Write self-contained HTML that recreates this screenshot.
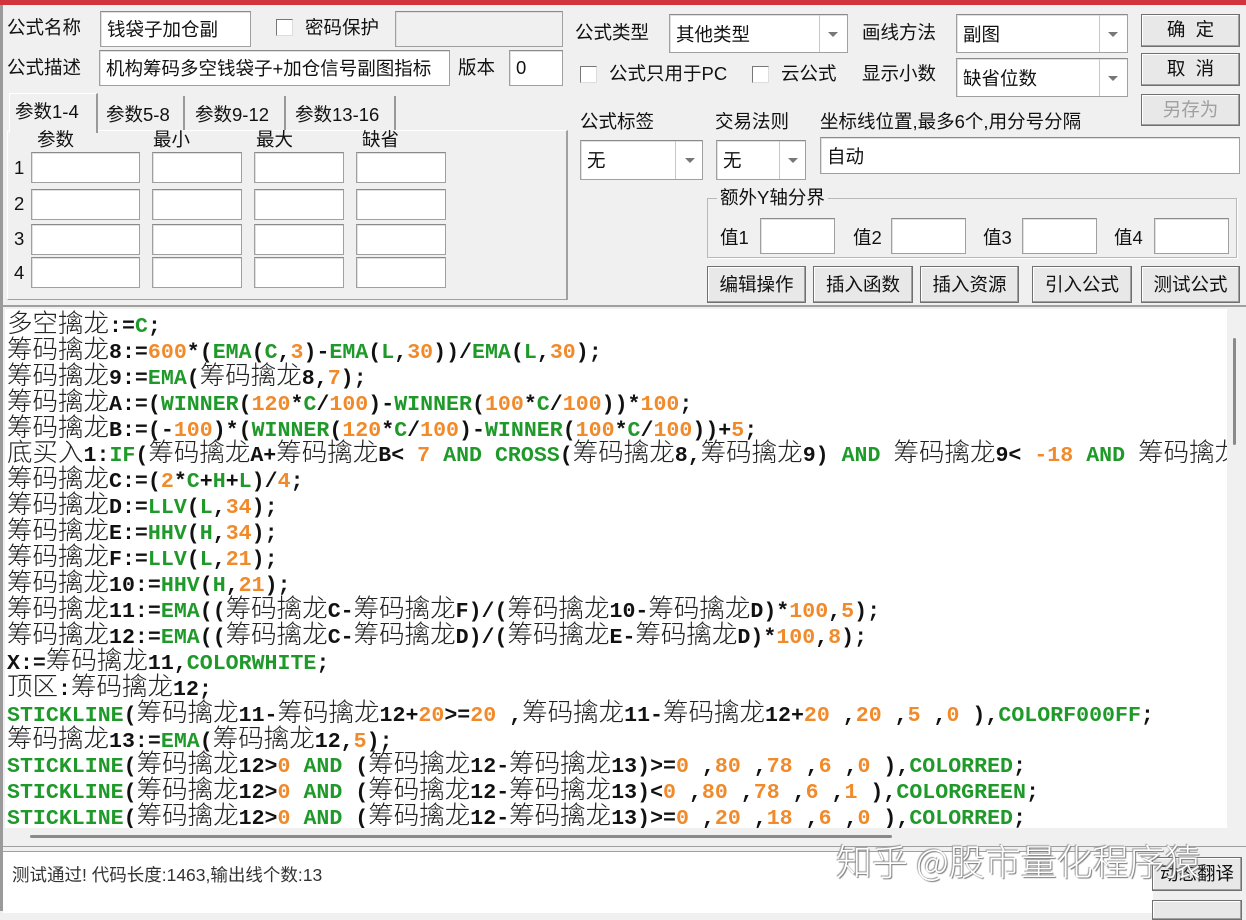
<!DOCTYPE html>
<html><head><meta charset="utf-8"><style>
*{box-sizing:border-box;margin:0;padding:0}
body{width:1246px;height:911px;background:#f0f0f0;position:relative;overflow:hidden;font-family:"Liberation Sans","Noto Sans CJK SC",sans-serif;font-size:18px;color:#111}
.a{position:absolute;white-space:nowrap}
.in{position:absolute;background:#fff;border:1px solid #a0a0a0;border-top-color:#8a8a8a;box-shadow:inset 1px 1px 0 #e0e0e0}
.lb{position:absolute;white-space:nowrap;font-size:18.5px;line-height:22px}
.cb{position:absolute;width:17px;height:17px;background:#fff;border:1px solid #777;border-right-color:#ddd;border-bottom-color:#ddd}
.btn{position:absolute;background:#e8e8e8;border:1px solid #707070;box-shadow:inset -1px -1px 0 #a0a0a0,inset 1px 1px 0 #fff;text-align:center;font-size:18.5px;line-height:30px}
.sel .dv{position:absolute;top:0;bottom:0;border-left:1px solid #c8c8c8}
.sel .ar{position:absolute;top:50%;margin-top:-2px;width:0;height:0;border-left:5px solid transparent;border-right:5px solid transparent;border-top:5px solid #777}
.tx{position:absolute;left:6px;top:50%;transform:translateY(-50%);font-size:18.5px}
#code{position:absolute;left:5px;top:309px;width:1222px;height:519px;background:#fff;overflow:hidden}
.ln{position:absolute;left:2px;white-space:nowrap;font-family:"Liberation Mono",monospace;font-weight:bold;font-size:21.6px;line-height:26px;color:#111}
.ln s{text-decoration:none;font-family:"Noto Sans CJK SC",sans-serif;font-weight:300;font-size:25.5px;color:#222}
.ln i{font-style:normal;color:#1f9a2a}
.ln u{text-decoration:none;color:#f08a2a}
</style></head><body>
<div class="a" style="left:0;top:0;width:1246px;height:5px;background:#d1343d"></div>
<div class="a" style="left:0;top:5px;width:3px;height:906px;background:#9a9a9a"></div>

<div class="lb" style="left:7px;top:17px">公式名称</div>
<div class="in" style="left:100px;top:11px;width:151px;height:36px"><span class="tx">钱袋子加仓副</span></div>
<div class="cb" style="left:276px;top:19px"></div>
<div class="lb" style="left:305px;top:17px">密码保护</div>
<div class="in" style="left:395px;top:11px;width:168px;height:36px;background:#f0f0f0"></div>

<div class="lb" style="left:7px;top:57px">公式描述</div>
<div class="in" style="left:99px;top:50px;width:351px;height:36px;overflow:hidden"><span class="tx">机构筹码多空钱袋子+加仓信号副图指标</span></div>
<div class="lb" style="left:458px;top:57px">版本</div>
<div class="in" style="left:509px;top:50px;width:54px;height:36px"><span class="tx">0</span></div>

<div class="a" style="left:7px;top:130px;width:561px;height:170px;border:1px solid #fff;border-right:2px solid #a0a0a0;border-bottom:1px solid #a0a0a0"></div>
<div class="a" style="left:9px;top:93px;width:89px;height:40px;background:#f0f0f0;border:1px solid #fff;border-right:2px solid #999;border-bottom:none"></div>
<div class="lb" style="left:15px;top:101px">参数1-4</div>
<div class="a" style="left:98px;top:96px;width:87px;height:34px;border-right:2px solid #999"></div>
<div class="lb" style="left:106px;top:104px">参数5-8</div>
<div class="a" style="left:185px;top:96px;width:101px;height:34px;border-right:2px solid #999"></div>
<div class="lb" style="left:195px;top:104px">参数9-12</div>
<div class="a" style="left:286px;top:96px;width:110px;height:34px;border-right:2px solid #999"></div>
<div class="lb" style="left:295px;top:104px">参数13-16</div>
<div class="lb" style="left:37px;top:129px">参数</div>
<div class="lb" style="left:153px;top:129px">最小</div>
<div class="lb" style="left:256px;top:129px">最大</div>
<div class="lb" style="left:362px;top:129px">缺省</div>

<div class="lb" style="left:14px;top:157px">1</div>
<div class="lb" style="left:14px;top:193px">2</div>
<div class="lb" style="left:14px;top:228px">3</div>
<div class="lb" style="left:14px;top:262px">4</div>
<div class="in" style="left:31px;top:152px;width:109px;height:31px"></div><div class="in" style="left:152px;top:152px;width:90px;height:31px"></div><div class="in" style="left:254px;top:152px;width:90px;height:31px"></div><div class="in" style="left:356px;top:152px;width:90px;height:31px"></div>
<div class="in" style="left:31px;top:189px;width:109px;height:31px"></div><div class="in" style="left:152px;top:189px;width:90px;height:31px"></div><div class="in" style="left:254px;top:189px;width:90px;height:31px"></div><div class="in" style="left:356px;top:189px;width:90px;height:31px"></div>
<div class="in" style="left:31px;top:224px;width:109px;height:31px"></div><div class="in" style="left:152px;top:224px;width:90px;height:31px"></div><div class="in" style="left:254px;top:224px;width:90px;height:31px"></div><div class="in" style="left:356px;top:224px;width:90px;height:31px"></div>
<div class="in" style="left:31px;top:257px;width:109px;height:31px"></div><div class="in" style="left:152px;top:257px;width:90px;height:31px"></div><div class="in" style="left:254px;top:257px;width:90px;height:31px"></div><div class="in" style="left:356px;top:257px;width:90px;height:31px"></div>

<div class="lb" style="left:575px;top:22px">公式类型</div>
<div class="in sel" style="left:669px;top:14px;width:179px;height:39px"><span class="tx">其他类型</span><div class="dv" style="left:149px"></div><div class="ar" style="left:158px"></div></div>
<div class="lb" style="left:862px;top:22px">画线方法</div>
<div class="in sel" style="left:956px;top:14px;width:172px;height:39px"><span class="tx">副图</span><div class="dv" style="left:142px"></div><div class="ar" style="left:151px"></div></div>
<div class="btn" style="left:1141px;top:14px;width:99px;height:33px">确&nbsp;&nbsp;定</div>

<div class="cb" style="left:580px;top:66px"></div>
<div class="lb" style="left:609px;top:63px">公式只用于PC</div>
<div class="cb" style="left:752px;top:66px"></div>
<div class="lb" style="left:781px;top:63px">云公式</div>
<div class="lb" style="left:862px;top:63px">显示小数</div>
<div class="in sel" style="left:956px;top:58px;width:172px;height:39px"><span class="tx">缺省位数</span><div class="dv" style="left:142px"></div><div class="ar" style="left:151px"></div></div>
<div class="btn" style="left:1141px;top:53px;width:99px;height:33px">取&nbsp;&nbsp;消</div>
<div class="btn" style="left:1141px;top:94px;width:99px;height:32px;color:#a0a0a0">另存为</div>

<div class="lb" style="left:580px;top:111px">公式标签</div>
<div class="lb" style="left:715px;top:111px">交易法则</div>
<div class="lb" style="left:820px;top:111px">坐标线位置,最多6个,用分号分隔</div>
<div class="in sel" style="left:580px;top:140px;width:123px;height:40px"><span class="tx">无</span><div class="dv" style="left:94px"></div><div class="ar" style="left:104px"></div></div>
<div class="in sel" style="left:716px;top:140px;width:90px;height:40px"><span class="tx">无</span><div class="dv" style="left:62px"></div><div class="ar" style="left:71px"></div></div>
<div class="in" style="left:820px;top:137px;width:420px;height:37px"><span class="tx">自动</span></div>

<div class="a" style="left:707px;top:198px;width:530px;height:60px;border:1px solid #b8b8b8;box-shadow:1px 1px 0 #fff"></div>
<div class="lb" style="left:717px;top:187px;background:#f0f0f0;padding:0 3px">额外Y轴分界</div>
<div class="lb" style="left:720px;top:227px">值1</div><div class="in" style="left:760px;top:218px;width:75px;height:36px"></div>
<div class="lb" style="left:853px;top:227px">值2</div><div class="in" style="left:891px;top:218px;width:75px;height:36px"></div>
<div class="lb" style="left:983px;top:227px">值3</div><div class="in" style="left:1022px;top:218px;width:75px;height:36px"></div>
<div class="lb" style="left:1114px;top:227px">值4</div><div class="in" style="left:1154px;top:218px;width:75px;height:36px"></div>

<div class="btn" style="left:707px;top:266px;width:99px;height:37px;line-height:35px">编辑操作</div>
<div class="btn" style="left:813px;top:266px;width:100px;height:37px;line-height:35px">插入函数</div>
<div class="btn" style="left:920px;top:266px;width:99px;height:37px;line-height:35px">插入资源</div>
<div class="btn" style="left:1032px;top:266px;width:100px;height:37px;line-height:35px">引入公式</div>
<div class="btn" style="left:1141px;top:266px;width:99px;height:37px;line-height:35px">测试公式</div>

<div class="a" style="left:3px;top:305px;width:1243px;height:2px;background:#a0a0a0"></div>
<div id="code">
<div class="ln" style="top:0px"><s>多空擒龙</s>:=<i>C</i>;</div>
<div class="ln" style="top:26px"><s>筹码擒龙</s>8:=<u>600</u>*(<i>EMA</i>(<i>C</i>,<u>3</u>)-<i>EMA</i>(<i>L</i>,<u>30</u>))/<i>EMA</i>(<i>L</i>,<u>30</u>);</div>
<div class="ln" style="top:52px"><s>筹码擒龙</s>9:=<i>EMA</i>(<s>筹码擒龙</s>8,<u>7</u>);</div>
<div class="ln" style="top:78px"><s>筹码擒龙</s>A:=(<i>WINNER</i>(<u>120</u>*<i>C</i>/<u>100</u>)-<i>WINNER</i>(<u>100</u>*<i>C</i>/<u>100</u>))*<u>100</u>;</div>
<div class="ln" style="top:104px"><s>筹码擒龙</s>B:=(-<u>100</u>)*(<i>WINNER</i>(<u>120</u>*<i>C</i>/<u>100</u>)-<i>WINNER</i>(<u>100</u>*<i>C</i>/<u>100</u>))+<u>5</u>;</div>
<div class="ln" style="top:129px"><s>底买入</s>1:<i>IF</i>(<s>筹码擒龙</s>A+<s>筹码擒龙</s>B&lt; <u>7</u> <i>AND</i> <i>CROSS</i>(<s>筹码擒龙</s>8,<s>筹码擒龙</s>9) <i>AND</i> <s>筹码擒龙</s>9&lt; <u>-18</u> <i>AND</i> <s>筹码擒龙</s>9&gt;</div>
<div class="ln" style="top:155px"><s>筹码擒龙</s>C:=(<u>2</u>*<i>C</i>+<i>H</i>+<i>L</i>)/<u>4</u>;</div>
<div class="ln" style="top:181px"><s>筹码擒龙</s>D:=<i>LLV</i>(<i>L</i>,<u>34</u>);</div>
<div class="ln" style="top:207px"><s>筹码擒龙</s>E:=<i>HHV</i>(<i>H</i>,<u>34</u>);</div>
<div class="ln" style="top:233px"><s>筹码擒龙</s>F:=<i>LLV</i>(<i>L</i>,<u>21</u>);</div>
<div class="ln" style="top:259px"><s>筹码擒龙</s>10:=<i>HHV</i>(<i>H</i>,<u>21</u>);</div>
<div class="ln" style="top:285px"><s>筹码擒龙</s>11:=<i>EMA</i>((<s>筹码擒龙</s>C-<s>筹码擒龙</s>F)/(<s>筹码擒龙</s>10-<s>筹码擒龙</s>D)*<u>100</u>,<u>5</u>);</div>
<div class="ln" style="top:311px"><s>筹码擒龙</s>12:=<i>EMA</i>((<s>筹码擒龙</s>C-<s>筹码擒龙</s>D)/(<s>筹码擒龙</s>E-<s>筹码擒龙</s>D)*<u>100</u>,<u>8</u>);</div>
<div class="ln" style="top:337px">X:=<s>筹码擒龙</s>11,<i>COLORWHITE</i>;</div>
<div class="ln" style="top:363px"><s>顶区</s>:<s>筹码擒龙</s>12;</div>
<div class="ln" style="top:389px"><i>STICKLINE</i>(<s>筹码擒龙</s>11-<s>筹码擒龙</s>12+<u>20</u>&gt;=<u>20</u> ,<s>筹码擒龙</s>11-<s>筹码擒龙</s>12+<u>20</u> ,<u>20</u> ,<u>5</u> ,<u>0</u> ),<i>COLORF000FF</i>;</div>
<div class="ln" style="top:415px"><s>筹码擒龙</s>13:=<i>EMA</i>(<s>筹码擒龙</s>12,<u>5</u>);</div>
<div class="ln" style="top:440px"><i>STICKLINE</i>(<s>筹码擒龙</s>12&gt;<u>0</u> <i>AND</i> (<s>筹码擒龙</s>12-<s>筹码擒龙</s>13)&gt;=<u>0</u> ,<u>80</u> ,<u>78</u> ,<u>6</u> ,<u>0</u> ),<i>COLORRED</i>;</div>
<div class="ln" style="top:466px"><i>STICKLINE</i>(<s>筹码擒龙</s>12&gt;<u>0</u> <i>AND</i> (<s>筹码擒龙</s>12-<s>筹码擒龙</s>13)&lt;<u>0</u> ,<u>80</u> ,<u>78</u> ,<u>6</u> ,<u>1</u> ),<i>COLORGREEN</i>;</div>
<div class="ln" style="top:492px"><i>STICKLINE</i>(<s>筹码擒龙</s>12&gt;<u>0</u> <i>AND</i> (<s>筹码擒龙</s>12-<s>筹码擒龙</s>13)&gt;=<u>0</u> ,<u>20</u> ,<u>18</u> ,<u>6</u> ,<u>0</u> ),<i>COLORRED</i>;</div>
</div>
<div class="a" style="left:1228px;top:309px;width:18px;height:519px;background:#f0f0f0"></div>
<div class="a" style="left:1233px;top:338px;width:3px;height:107px;background:#8a8a8a;border-radius:2px"></div>
<div class="a" style="left:30px;top:835px;width:862px;height:3px;background:#8a8a8a;border-radius:2px"></div>
<div class="a" style="left:3px;top:846px;width:1243px;height:1px;background:#a0a0a0"></div>
<div class="a" style="left:3px;top:851px;width:1150px;height:62px;background:#fff;border-top:1px solid #a0a0a0"></div>
<div class="a" style="left:12px;top:862px;font-size:17.5px;color:#333">测试通过! 代码长度:1463,输出线个数:13</div>
<div class="btn" style="left:1152px;top:857px;width:90px;height:34px;line-height:32px">动态翻译</div>
<div class="btn" style="left:1152px;top:900px;width:90px;height:20px"></div>
<div class="a" style="left:836px;top:834px;font-size:36px;color:#fff;text-shadow:1px 1px 1px #777,-1px -1px 1px #999;font-family:'Noto Sans CJK SC',sans-serif;font-weight:300">知乎 @股市量化程序猿</div>
</body></html>
